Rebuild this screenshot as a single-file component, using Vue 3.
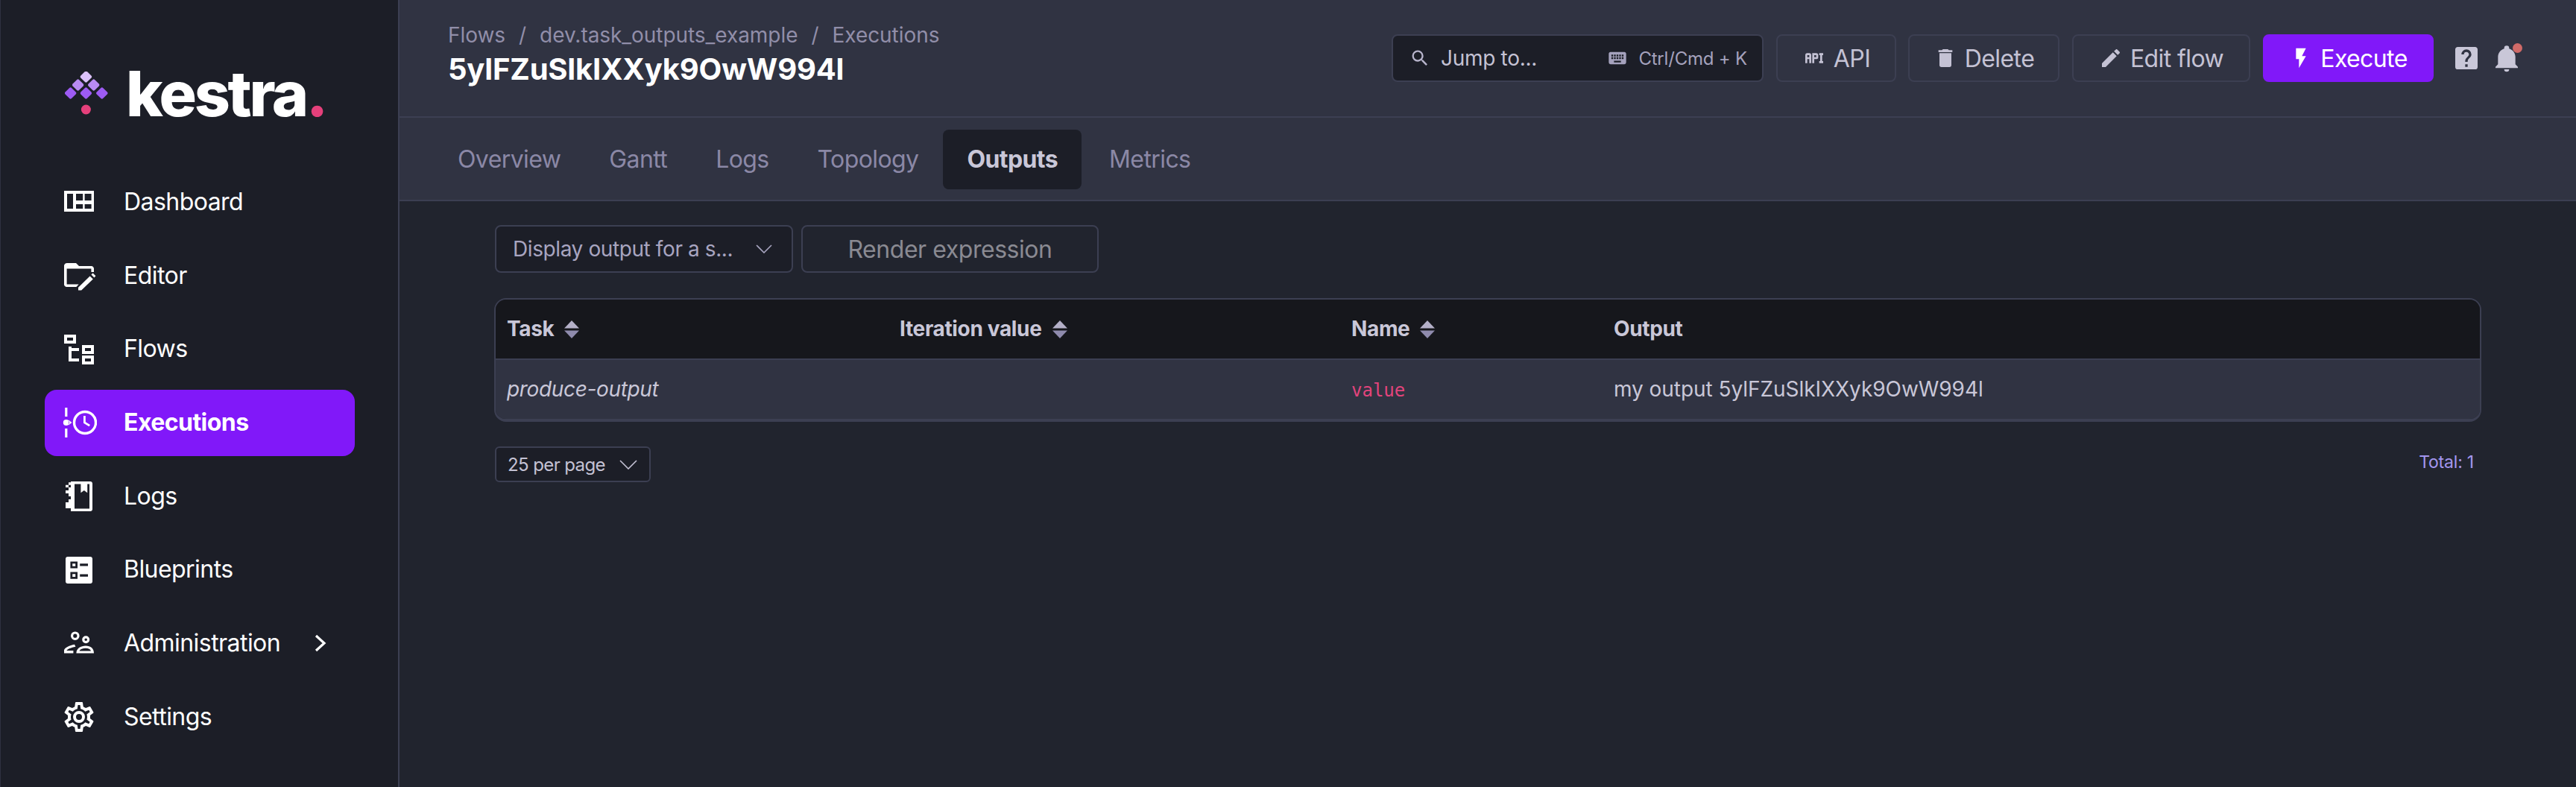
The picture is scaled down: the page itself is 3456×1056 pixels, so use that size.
<script setup>
const nav = [
  { label: 'Dashboard', paths: ['M2 4.5H22V18.5H2ZM4 6.5V16.5H8V6.5ZM10 6.5V11H14.6V6.5ZM10 13.5V16.5H14.6V13.5ZM15.8 6.5V11H20.3V6.5ZM15.8 13.5V16.5H20.3V13.5Z'] },
  { label: 'Editor', paths: ['M4 3.5H10L12 5.5H20.2C21.2 5.5 22 6.3 22 7.3V9.5H20.2V7.3H3.8V17.7H11.8L10.2 19.5H3.8C2.8 19.5 2 18.7 2 17.7V5.3C2 4.3 2.9 3.5 4 3.5Z', 'M11.5 19.9L19.3 12.2L21.4 14.3L13.6 21.8L11.5 21.8ZM20.2 11.3L21.3 10.2L23.2 12.1L22.2 13.3Z'] },
  { label: 'Flows', paths: ['M12 13H7V18H12V20H5V10H7V11H12V13M8 4V6H4V4H8M10 2H2V8H10V2M20 11V13H16V11H20M22 9H14V15H22V9M20 18V20H16V18H20M22 16H14V22H22V16Z'] },
  { label: 'Executions', active: true, paths: ['M2.6 2H4.2V8H2.6ZM2.6 16H4.2V22H2.6Z', 'M3.4 10A2 2 0 1 1 3.4 14A2 2 0 1 1 3.4 10ZM5 10.3L7.2 12L5 13.7Z', 'M16 3.9A8.1 8.1 0 1 1 16 20.1A8.1 8.1 0 1 1 16 3.9ZM16 5.6A6.4 6.4 0 1 0 16 18.4A6.4 6.4 0 1 0 16 5.6Z', 'M15 7.5H16.4V11.6L19.5 13.5L18.7 14.6L15 12.4Z'] },
  { label: 'Logs', paths: ['M6.5 2H19.6C20.4 2 21 2.6 21 3.4V20.6C21 21.4 20.4 22 19.6 22H6.5V20H5V18H3V16H5V14H6.5V12H5V10H3V8H5V6H6.5V4.4H5V2.6H6.5ZM9 3.7V20.2H19V3.7H17.6V9.6L15.4 8L13.2 9.6V3.7Z', 'M3 4.4H5V6H3ZM3 18H5V20H3Z'] },
  { label: 'Blueprints', paths: ['M4.4 3H19.6C20.4 3 21 3.6 21 4.4V19.6C21 20.4 20.4 21 19.6 21H4.4C3.6 21 3 20.4 3 19.6V4.4C3 3.6 3.6 3 4.4 3ZM6.2 6.2V10.8H11V6.2ZM7.6 7.6H9.6V9.4H7.6ZM6.2 13.2V17.9H11V13.2ZM7.6 14.6H9.6V16.5H7.6ZM12.6 7.6V9.3H18V7.6ZM12.6 14.7V16.4H18V14.7Z'] },
  { label: 'Administration', chevron: true, paths: ['M9.4 4.2A2.9 2.9 0 1 1 9.4 10A2.9 2.9 0 1 1 9.4 4.2ZM9.4 5.8A1.3 1.3 0 1 0 9.4 8.4A1.3 1.3 0 1 0 9.4 5.8Z', 'M16.6 7.1A2.5 2.5 0 1 1 16.6 12.1A2.5 2.5 0 1 1 16.6 7.1ZM16.6 8.7A.9.9 0 1 0 16.6 10.5A.9.9 0 1 0 16.6 8.7Z', 'M2 18.8V16.6C2.6 15 5.6 13.6 9 12.9L9.7 14.4C6.6 15 4.2 16 3.7 17H8.2V18.8Z', 'M16.5 13.8C19.8 13.8 22 15.6 22 18.8H10.2C10.2 15.6 13.2 13.8 16.5 13.8ZM16.5 15.4C14.5 15.4 12.8 16 12.2 17.2H20C19.6 16 18.4 15.4 16.5 15.4Z'] },
  { label: 'Settings', paths: ['M12,8A4,4 0 0,1 16,12A4,4 0 0,1 12,16A4,4 0 0,1 8,12A4,4 0 0,1 12,8M12,10A2,2 0 0,0 10,12A2,2 0 0,0 12,14A2,2 0 0,0 14,12A2,2 0 0,0 12,10M10,22C9.75,22 9.54,21.82 9.5,21.58L9.13,18.93C8.5,18.68 7.96,18.34 7.44,17.94L4.95,18.95C4.73,19.03 4.46,18.95 4.34,18.73L2.34,15.27C2.21,15.05 2.27,14.78 2.46,14.63L4.57,12.97L4.5,12L4.57,11L2.46,9.37C2.27,9.22 2.21,8.95 2.34,8.73L4.34,5.27C4.46,5.05 4.73,4.96 4.95,5.05L7.44,6.05C7.96,5.66 8.5,5.32 9.13,5.07L9.5,2.42C9.54,2.18 9.75,2 10,2H14C14.25,2 14.46,2.18 14.5,2.42L14.87,5.07C15.5,5.32 16.04,5.66 16.56,6.05L19.05,5.05C19.27,4.96 19.54,5.05 19.66,5.27L21.66,8.73C21.79,8.95 21.73,9.22 21.54,9.37L19.43,11L19.5,12L19.43,13L21.54,14.63C21.73,14.78 21.79,15.05 21.66,15.27L19.66,18.73C19.54,18.95 19.27,19.04 19.05,18.95L16.56,17.95C16.04,18.34 15.5,18.68 14.87,18.93L14.5,21.58C14.46,21.82 14.25,22 14,22H10M11.25,4L10.88,6.61C9.68,6.86 8.62,7.5 7.85,8.39L5.44,7.35L4.69,8.65L6.8,10.2C6.4,11.37 6.4,12.64 6.8,13.8L4.68,15.36L5.43,16.66L7.86,15.62C8.63,16.5 9.68,17.14 10.87,17.38L11.24,20H12.76L13.13,17.39C14.32,17.14 15.37,16.5 16.14,15.62L18.57,16.66L19.32,15.36L17.2,13.81C17.6,12.64 17.6,11.37 17.2,10.2L19.31,8.65L18.56,7.35L16.15,8.39C15.38,7.5 14.32,6.86 13.12,6.62L12.75,4H11.25Z'] }
]
const tabs = ['Overview', 'Gantt', 'Logs', 'Topology', 'Outputs', 'Metrics']
const diamonds = [
  { x: 28.4, y: 7, c: '#dcc2fb' },
  { x: 17.6, y: 18, c: '#b98bf2' },
  { x: 38.7, y: 18, c: '#b98bf2' },
  { x: 7.6, y: 29, c: '#9d5bf3' },
  { x: 28.4, y: 29, c: '#9d5bf3' },
  { x: 49.8, y: 29, c: '#9d5bf3' }
]
</script>

<template>
  <div class="app">
    <aside class="sidebar">
      <div class="logo">
        <svg class="logo-mark" width="58" height="60" viewBox="0 0 58 60">
          <rect v-for="d in diamonds" :key="d.x + '-' + d.y" x="-6" y="-6" width="12" height="12" rx="2" :fill="d.c" :transform="`translate(${d.x} ${d.y}) rotate(45)`" />
          <circle cx="28.4" cy="51" r="6.5" fill="#e5407b" />
        </svg>
        <span class="logo-text">kestra<span class="logo-dot">.</span></span>
      </div>
      <nav class="nav">
        <a v-for="item in nav" :key="item.label" class="nav-item" :class="{ active: item.active }">
          <svg class="nav-icon" viewBox="0 0 24 24" fill="currentColor" fill-rule="evenodd">
            <path v-for="p in item.paths" :key="p" :d="p" />
          </svg>
          <span class="nav-label">{{ item.label }}</span>
          <svg v-if="item.chevron" class="nav-chevron" width="16" height="24" viewBox="0 0 16 24" fill="none" stroke="currentColor" stroke-width="3.2">
            <path d="M2 2L13 12L2 22" />
          </svg>
        </a>
      </nav>
    </aside>

    <main class="main">
      <header class="header">
        <div class="heading">
          <div class="crumbs">
            <span>Flows</span><span class="sep">/</span><span>dev.task_outputs_example</span><span class="sep">/</span><span>Executions</span>
          </div>
          <h1 class="title">5ylFZuSlkIXXyk9OwW994l</h1>
        </div>
        <div class="actions">
          <div class="jump">
            <svg class="jump-search" width="28" height="28" viewBox="0 0 24 24" fill="currentColor"><path d="M9.5,3A6.5,6.5 0 0,1 16,9.5C16,11.11 15.41,12.59 14.44,13.73L14.71,14H15.5L20.5,19L19,20.5L14,15.5V14.71L13.73,14.44C12.59,15.41 11.11,16 9.5,16A6.5,6.5 0 0,1 3,9.5A6.5,6.5 0 0,1 9.5,3M9.5,5C7,5 5,7 5,9.5C5,12 7,14 9.5,14C12,14 14,12 14,9.5C14,7 12,5 9.5,5Z" /></svg>
            <span class="jump-text">Jump to...</span>
            <svg class="jump-kbd" width="28" height="28" viewBox="0 0 24 24" fill="currentColor"><path d="M19,10H17V8H19M19,13H17V11H19M16,10H14V8H16M16,13H14V11H16M16,17H8V15H16M7,10H5V8H7M7,13H5V11H7M8,11H10V13H8M8,8H10V10H8M11,11H13V13H11M11,8H13V10H11M20,5H4C2.89,5 2,5.89 2,7V17A2,2 0 0,0 4,19H20A2,2 0 0,0 22,17V7C22,5.89 21.1,5 20,5Z" /></svg>
            <span class="jump-hint">Ctrl/Cmd + K</span>
          </div>
          <button class="btn btn-api">
            <svg width="32" height="32" viewBox="0 0 24 24" fill="currentColor"><path d="M7 7H5A2 2 0 0 0 3 9V17H5V13H7V17H9V9A2 2 0 0 0 7 7M7 11H5V9H7M14 7H10V17H12V13H14A2 2 0 0 0 16 11V9A2 2 0 0 0 14 7M14 11H12V9H14M20 9V15H21V17H17V15H18V9H17V7H21V9Z" /></svg>
            API
          </button>
          <button class="btn btn-delete">
            <svg width="32" height="32" viewBox="0 0 24 24" fill="currentColor"><path d="M19,4H15.5L14.5,3H9.5L8.5,4H5V6H19M6,19A2,2 0 0,0 8,21H16A2,2 0 0,0 18,19V7H6V19Z" /></svg>
            Delete
          </button>
          <button class="btn btn-edit">
            <svg width="32" height="32" viewBox="0 0 24 24" fill="currentColor"><path d="M20.71,7.04C21.1,6.65 21.1,6 20.71,5.63L18.37,3.29C18,2.9 17.35,2.9 16.96,3.29L15.12,5.12L18.87,8.87M3,17.25V21H6.75L17.81,9.93L14.06,6.18L3,17.25Z" /></svg>
            Edit flow
          </button>
          <button class="btn btn-primary">
            <svg width="32" height="32" viewBox="0 0 24 24" fill="currentColor"><path d="M7,2V13H10V22L17,10H13L17,2H7Z" /></svg>
            Execute
          </button>
          <svg class="help" width="40" height="40" viewBox="0 0 24 24" fill="currentColor"><path d="M15.07,11.25L14.17,12.17C13.45,12.89 13,13.5 13,15H11V14.5C11,13.39 11.45,12.39 12.17,11.67L13.41,10.41C13.78,10.05 14,9.55 14,9C14,7.89 13.1,7 12,7A2,2 0 0,0 10,9H8A4,4 0 0,1 12,5A4,4 0 0,1 16,9C16,9.88 15.64,10.67 15.07,11.25M13,19H11V17H13M19,3H5C3.89,3 3,3.89 3,5V19A2,2 0 0,0 5,21H19A2,2 0 0,0 21,19V5C21,3.89 20.1,3 19,3Z" /></svg>
          <div class="bell">
            <svg width="40" height="40" viewBox="0 0 24 24" fill="currentColor"><path d="M21,19V20H3V19L5,17V11C5,7.9 7.03,5.17 10,4.29C10,4.19 10,4.1 10,4A2,2 0 0,1 12,2A2,2 0 0,1 14,4C14,4.1 14,4.19 14,4.29C16.97,5.17 19,7.9 19,11V17L21,19M14,21A2,2 0 0,1 12,23A2,2 0 0,1 10,21" /></svg>
            <span class="bell-dot"></span>
          </div>
        </div>
      </header>

      <div class="tabs">
        <a v-for="t in tabs" :key="t" class="tab" :class="{ active: t === 'Outputs' }">{{ t }}</a>
      </div>

      <section class="content">
        <div class="controls">
          <div class="select">
            <span>Display output for a s...</span>
            <svg width="22" height="12" viewBox="0 0 22 12" fill="none" stroke="currentColor" stroke-width="1.6"><path d="M1 1L11 11L21 1" /></svg>
          </div>
          <button class="render">Render expression</button>
        </div>

        <div class="table-wrap">
          <table class="table">
            <colgroup>
              <col class="col-task" />
              <col class="col-iter" />
              <col class="col-name" />
              <col />
            </colgroup>
            <thead>
              <tr>
                <th>Task<svg class="sort" width="20" height="24" viewBox="0 0 20 24"><path d="M10 0L20 10.5H0Z" fill="#b4b0c8" /><path d="M0 13.5H20L10 24Z" fill="#8f8bad" /></svg></th>
                <th>Iteration value<svg class="sort" width="20" height="24" viewBox="0 0 20 24"><path d="M10 0L20 10.5H0Z" fill="#b4b0c8" /><path d="M0 13.5H20L10 24Z" fill="#8f8bad" /></svg></th>
                <th>Name<svg class="sort" width="20" height="24" viewBox="0 0 20 24"><path d="M10 0L20 10.5H0Z" fill="#b4b0c8" /><path d="M0 13.5H20L10 24Z" fill="#8f8bad" /></svg></th>
                <th>Output</th>
              </tr>
            </thead>
            <tbody>
              <tr>
                <td class="task">produce-output</td>
                <td></td>
                <td><code class="code">value</code></td>
                <td>my output 5ylFZuSlkIXXyk9OwW994l</td>
              </tr>
            </tbody>
          </table>
        </div>

        <div class="pager">
          <div class="per-page">
            <span>25 per page</span>
            <svg width="24" height="13" viewBox="0 0 24 13" fill="none" stroke="currentColor" stroke-width="1.6"><path d="M1 1L12 12L23 1" /></svg>
          </div>
          <span class="total">Total: 1</span>
        </div>
      </section>
    </main>
  </div>
</template>

<style>
html, body { margin: 0; background: #21242e; }
</style>

<style scoped>
* { box-sizing: border-box; }
.app {
  display: flex;
  width: 3456px;
  height: 1056px;
  overflow: hidden;
  font-family: Inter, "Liberation Sans", sans-serif;
  font-size: 32px;
  color: #fff;
  background: #21242e;
}
.sidebar {
  width: 536px;
  flex: none;
  background: #1c1e27;
  border-left: 1px solid #2f3140;
  border-right: 2px solid #3c3f52;
}
.logo {
  height: 227px;
  display: flex;
  align-items: flex-start;
  padding: 96px 0 0 86px;
}
.logo-mark { flex: none; }
.logo-text {
  margin: -20px 0 0 24px;
  font-size: 84px;
  line-height: 100px;
  font-weight: 800;
  letter-spacing: -3.3px;
}
.logo-dot { color: #e5407b; }
.nav {
  display: flex;
  flex-direction: column;
  gap: 10px;
}
.nav-item {
  display: flex;
  align-items: center;
  width: 416px;
  height: 88.7px;
  margin-left: 59px;
  padding-left: 22px;
  border-radius: 16px;
  letter-spacing: -0.55px;
}
.nav-item.active {
  background: #8118f9;
  font-weight: 700;
}
.nav-icon {
  width: 48px;
  height: 48px;
  flex: none;
  margin-right: 36px;
}
.nav-label { margin-top: -2px; }
.nav-chevron { margin-left: 46px; }

.main {
  flex: 1;
  min-width: 0;
  display: flex;
  flex-direction: column;
}
.header {
  height: 158px;
  flex: none;
  display: flex;
  align-items: flex-start;
  justify-content: space-between;
  background: #303342;
  border-bottom: 2px solid #3c3f52;
  padding: 0 73px 0 65px;
}
.heading { padding-top: 29px; }
.crumbs {
  display: flex;
  font-size: 28px;
  line-height: 36px;
  color: #918ea9;
  letter-spacing: -0.05px;
}
.sep { margin: 0 18px; }
.title {
  margin: 4px 0 0;
  font-size: 40px;
  line-height: 48px;
  font-weight: 700;
  letter-spacing: -0.2px;
}
.actions {
  display: flex;
  align-items: center;
  height: 64px;
  margin-top: 46px;
}
.jump {
  display: flex;
  align-items: center;
  width: 499px;
  height: 64px;
  margin-right: 17px;
  padding: 0 20px 0 22px;
  background: #1c1e27;
  border: 2px solid #3c3f52;
  border-radius: 8px;
  color: #b8b5cc;
}
.jump-search { flex: none; margin-right: 14px; }
.jump-text {
  font-size: 28px;
  color: #c4c2d4;
  letter-spacing: -0.3px;
}
.jump-kbd { flex: none; margin-left: auto; margin-right: 14px; color: #a5a2bd; }
.jump-hint {
  font-size: 24px;
  color: #a5a2bd;
  letter-spacing: -0.2px;
}
.btn {
  display: flex;
  align-items: center;
  justify-content: center;
  gap: 10px;
  height: 64px;
  padding: 0;
  font: inherit;
  font-size: 32px;
  letter-spacing: -0.6px;
  color: #c4c2d4;
  background: transparent;
  border: 2px solid #3c3f52;
  border-radius: 8px;
}
.btn-api { width: 161px; margin-right: 16px; }
.btn-delete { width: 203px; margin-right: 17px; }
.btn-edit { width: 239px; margin-right: 17px; }
.btn-primary {
  width: 229px;
  color: #fff;
  background: #8118f9;
  border-color: #8118f9;
}
.help { flex: none; margin-left: 24px; color: #c9c7d8; }
.bell {
  position: relative;
  display: flex;
  margin-left: 14px;
  color: #c9c7d8;
}
.bell-dot {
  position: absolute;
  top: 0;
  right: -1px;
  width: 13px;
  height: 13px;
  border-radius: 50%;
  background: #d06a68;
}
.tabs {
  height: 112px;
  flex: none;
  display: flex;
  align-items: center;
  gap: 1px;
  padding: 1px 0 0 46px;
  background: #303342;
  border-bottom: 2px solid #3c3f52;
}
.tab {
  height: 80px;
  display: flex;
  align-items: center;
  padding: 0 32px;
  border-radius: 8px;
  color: #8b88a6;
  letter-spacing: -0.6px;
}
.tab.active {
  background: #1c1e27;
  color: #c9c7d8;
  font-weight: 700;
  margin-right: 4px;
}
.content {
  padding: 32px 127px 0 127px;
}
.controls {
  display: flex;
  gap: 11px;
  padding-left: 1px;
}
.select {
  width: 400px;
  height: 64px;
  display: flex;
  align-items: center;
  justify-content: space-between;
  padding: 0 26px 0 22px;
  background: #1c1e27;
  border: 2px solid #3c3f52;
  border-radius: 8px;
  font-size: 28px;
  color: #a8a5c0;
  letter-spacing: -0.4px;
}
.render {
  width: 399px;
  height: 64px;
  padding: 0;
  font: inherit;
  letter-spacing: -0.45px;
  color: #8a8a92;
  background: transparent;
  border: 2px solid #3c3f52;
  border-radius: 8px;
}
.table-wrap {
  margin-top: 34px;
  border: 2px solid #3c3f52;
  border-bottom-width: 4px;
  border-radius: 16px;
  overflow: hidden;
}
.table {
  width: 100%;
  border-collapse: collapse;
  table-layout: fixed;
  font-size: 28px;
}
.col-task { width: 527px; }
.col-iter { width: 606px; }
.col-name { width: 352px; }
.table th {
  height: 80px;
  padding: 0 15px 2px;
  background: #16171c;
  border-bottom: 2px solid #3c3f52;
  text-align: left;
  font-weight: 700;
  color: #c9c7d8;
  letter-spacing: -0.35px;
}
.sort { margin-left: 14px; vertical-align: -3px; }
.table td {
  height: 80px;
  padding: 0 15px 2px;
  background: #303342;
  color: #c9c7d8;
  letter-spacing: -0.05px;
}
.table td.task { font-style: italic; letter-spacing: -0.35px; }
.code {
  font-family: "DejaVu Sans Mono", "Liberation Mono", monospace;
  font-size: 24px;
  letter-spacing: 0;
  color: #e2447c;
}
.pager {
  display: flex;
  align-items: center;
  justify-content: space-between;
  margin-top: 33px;
  padding: 0 10px 0 1px;
}
.per-page {
  width: 209px;
  height: 48px;
  display: flex;
  align-items: center;
  justify-content: space-between;
  padding: 0 16px 0 15px;
  background: #1c1e27;
  border: 2px solid #3c3f52;
  border-radius: 6px;
  font-size: 24px;
  color: #c4c2d4;
  letter-spacing: -0.6px;
}
.total {
  font-size: 23px;
  color: #a396ef;
  letter-spacing: -0.2px;
  margin-top: -6px;
}
</style>
